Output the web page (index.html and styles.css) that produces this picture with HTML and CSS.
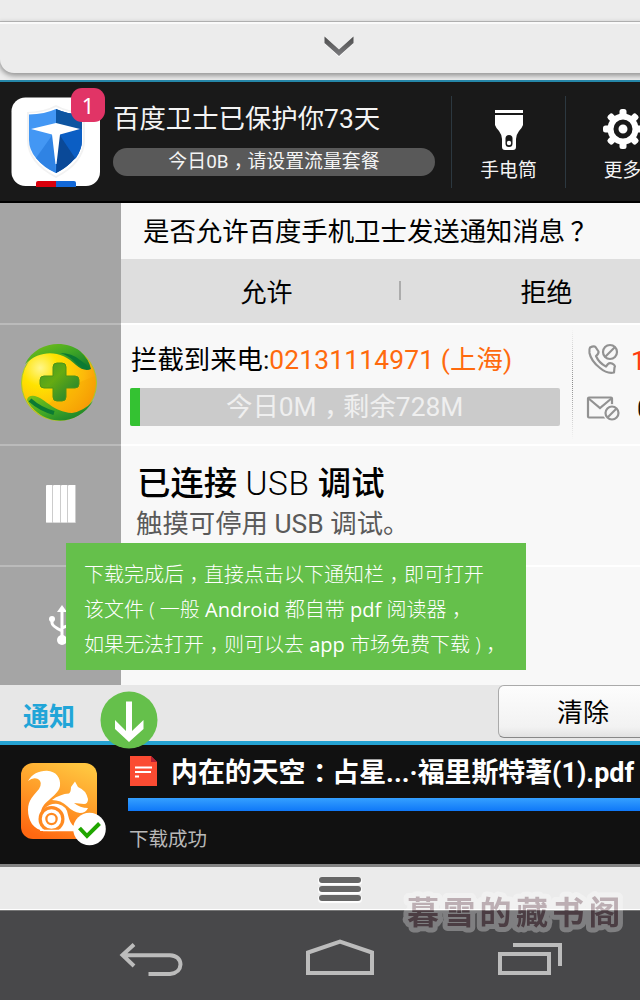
FILE: index.html
```html
<!DOCTYPE html>
<html lang="zh-CN">
<head>
<meta charset="utf-8">
<title>通知</title>
<link rel="stylesheet" href="styles.css">
</head>
<body>
<main class="screen">
  <div class="drawer">
    <div class="drawer-strip"></div>
    <div class="drawer-panel">
      <svg class="chevron" width="34" height="24" viewBox="0 0 34 24"><defs><linearGradient id="cg" x1="0" y1="0" x2="0" y2="1"><stop offset="0" stop-color="#4d4d4d"/><stop offset="1" stop-color="#7c7c7f"/></linearGradient></defs><path d="M3 4.500L17 17.500L31 4.500V9L17 22L3 9Z" fill="#fff"/><path d="M2.500 1.500L17 14.500L31.500 1.500V8L17 21L2.500 8Z" fill="url(#cg)"/></svg>
    </div>
  </div>

  <section class="guard">
    <div class="guard-logo">
      <svg width="90" height="90" viewBox="0 0 90 90">
        <rect x=".5" y=".5" width="88.500" height="88.500" rx="14" fill="#fff"/>
        <path d="M45 8Q58 15 74 15V43Q74 66 45 81Q16 66 16 43V15Q32 15 45 8Z" fill="#f2f2f2"/>
        <path d="M45 10Q57 16 72 16V43Q72 65 45 79Q18 65 18 43V16Q33 16 45 10Z" fill="#fff"/>
        <path d="M45 12Q34 17 18 17.500V43Q18 62 45 76Z" fill="#4397f4"/>
        <path d="M45 12Q56 17 71 17.500V43Q71 62 45 76Z" fill="#0b57b2"/>
        <path d="M45 12V27L71 32V17.500Q56 17 45 12Z" fill="#0d55a1"/>
        <path d="M45 76L65 61Q71 52 71 43V32L48 37Z" fill="#0b5ec4"/>
        <path d="M48 37L64 61Q56 71 45 76Z" fill="#0a4998"/>
        <path d="M42 37L25 61Q33 71 45 76Z" fill="#2f83e4"/>
        <path d="M20 32L45 26L69 32L49 37.500L45.500 67H44.500L41 37.500Z" fill="#fff"/>
        <path d="M25 89V86Q25 84 27 84H45V90H25Z" fill="#d9000c"/><path d="M45 84H63Q65 84 65 86V90H45Z" fill="#1268d8"/>
      </svg>
      <span class="guard-count">1</span>
    </div>
    <div class="guard-info">
      <div class="guard-title">百度卫士已保护你73天</div>
      <div class="guard-pill">今日0B<i class="mid">，</i>请设置流量套餐</div>
    </div>
    <div class="tool tool-torch">
      <svg width="30" height="42" viewBox="0 0 30 42"><path fill="#fff" d="M1 1H29V4H1ZM1 6H29V16Q28 19 25 22Q22 26 22 30V38Q22 41 19 41H11Q8 41 8 38V30Q8 26 5 22Q2 19 1 16Z"/><rect x="11.500" y="26" width="7" height="12" rx="3.500" fill="#191919"/><circle cx="15" cy="34" r="2.200" fill="#fff"/></svg>
      <span>手电筒</span>
    </div>
    <div class="tool tool-more">
      <svg width="42" height="42" viewBox="-21 -21 42 42"><g fill="#fff"><g id="teeth"><rect x="-3.500" y="-20" width="7" height="40" rx="2.500"/><rect x="-20" y="-3.500" width="40" height="7" rx="2.500"/></g><use href="#teeth" transform="rotate(45)"/><circle r="15.500"/></g><circle r="7" fill="none" stroke="#191919" stroke-width="5"/></svg>
      <span>更多</span>
    </div>
  </section>

  <section class="list">
    <article class="row row-ask">
      <div class="side"></div>
      <div class="body">
        <div class="ask-title">是否允许百度手机卫士发送通知消息<i class="mid-q">？</i></div>
        <div class="ask-actions"><span class="act">允许</span><b class="act-sep"></b><span class="act">拒绝</span></div>
      </div>
    </article>

    <article class="row row-360">
      <div class="side">
        <svg width="78" height="78" viewBox="0 0 78 78">
          <defs><radialGradient id="y" cx=".25" cy=".3" r=".8"><stop offset="0" stop-color="#fff68a"/><stop offset=".3" stop-color="#ffe300"/><stop offset=".75" stop-color="#fdb80a"/><stop offset="1" stop-color="#f79a08"/></radialGradient><linearGradient id="g" x1="0" y1="0" x2="1" y2="1"><stop offset="0" stop-color="#7fc315"/><stop offset=".5" stop-color="#3fa626"/><stop offset="1" stop-color="#0b7330"/></linearGradient><linearGradient id="p" x1="0" y1="0" x2="1" y2="1"><stop offset="0" stop-color="#3f9a28"/><stop offset=".4" stop-color="#65ab12"/><stop offset="1" stop-color="#157b37"/></linearGradient></defs>
          <circle cx="39" cy="39" r="37.500" fill="url(#y)" stroke="#a8c928"/>
          <path d="M43 45L75 32Q77 57 54 68Q39 69 27 62Z" fill="#f6a400" opacity=".4"/>
          <path d="M5 20C16-2 44-5 60 7Q69 15 71 25Q64 28 56 21C42 7 22 4 5 20Z" fill="url(#g)"/>
          <path d="M40 9Q52 9 60 16Q65 19 70 25Q64 26 57 20Q50 12 40 9Z" fill="#0b7a33"/>
          <path d="M7 56Q8 51 15 52C26 55 33 68 52 69Q64 67 73 57C61 78 35 82 18 69Q10 63 7 56Z" fill="url(#g)"/>
          <path d="M10 56Q20 65 34 69" fill="none" stroke="#0b7a33" stroke-width="4"/>
          <path d="M37 19H42Q46 19 46 23V32H55Q59 32 59 36V40Q59 44 55 44H46V53Q46 57 42 57H37Q33 57 33 53V44H24Q20 44 20 40V36Q20 32 24 32H33V23Q33 19 37 19Z" fill="url(#p)" stroke="#4e9318"/>
        </svg>
      </div>
      <div class="body body-360">
        <div class="call">
          <div class="call-line">拦截到来电:<em>02131114971 (上海)</em></div>
          <div class="quota"><b class="quota-used"></b><span>今日0M<i class="mid">，</i>剩余728M</span></div>
        </div>
        <div class="dots"></div>
        <div class="stats">
          <div class="stat"><svg width="34" height="34" viewBox="0 0 34 34" fill="none" stroke="#929292" stroke-width="2.200"><path d="M4 4.500Q8 2.500 9.500 4L12.500 8.500Q13 10.500 10 13Q13 20 20 23.500L22 21Q23.500 19.500 26 20.500Q30 22.500 28.500 24.500L28 29.500Q21 31 14 25Q5 18 3.500 10Q3 6 4 4.500Z" stroke-linejoin="round"/><circle cx="24" cy="9" r="9.500" fill="#f8f8f8" stroke="none"/><circle cx="24" cy="9" r="7"/><path d="M19 14L29 4"/></svg><span class="num-red">1</span></div>
          <div class="stat stat-mail"><svg width="34" height="28" viewBox="0 0 34 28" fill="none" stroke="#929292" stroke-width="2.200"><rect x="2" y="2.500" width="24" height="20" rx="1"/><path d="M2 3L14 13L26 3"/><circle cx="26" cy="18" r="9" fill="#f8f8f8" stroke="none"/><circle cx="26" cy="18" r="6.500"/><path d="M21.500 22.500L30.500 13.500"/></svg><span class="num-black">0</span></div>
        </div>
      </div>
    </article>

    <article class="row row-usb">
      <div class="side"><div class="bars"><b></b><b></b><b></b><b></b></div></div>
      <div class="body">
        <div class="usb-title">已连接 <span>USB</span> 调试</div>
        <div class="usb-sub">触摸可停用 USB 调试。</div>
      </div>
    </article>

    <article class="row row-last">
      <div class="side"><svg width="32" height="42" viewBox="0 0 32 42" fill="none" stroke="#fff" stroke-width="3"><path d="M17 5V36M7 15V19Q7 22 17 27M27 13V18Q27 20 17 24"/><path d="M17 1L22 8H12Z" fill="#fff" stroke="none"/><circle cx="17" cy="36" r="5" fill="#fff" stroke="none"/><circle cx="7" cy="15" r="3" fill="#fff" stroke="none"/></svg></div>
      <div class="body"></div>
    </article>

    <aside class="tip">
      <p>下载完成后<i class="mid">，</i>直接点击以下通知栏<i class="mid">，</i>即可打开</p>
      <p>该文件 ( 一般 <b>Android</b> 都自带 <b>pdf</b> 阅读器<i class="mid">，</i></p>
      <p>如果无法打开<i class="mid">，</i>则可以去 <b>app</b> 市场免费下载 )<i class="mid">，</i></p>
    </aside>
  </section>

  <section class="bar">
    <h2>通知</h2>
    <button class="clear">清除</button>
    <svg class="down" width="58" height="58" viewBox="0 0 58 58"><circle cx="29" cy="29" r="28.500" fill="#65c04b"/><path d="M26 10.500H32V40L43.500 29V38L29 51L15 38V29L26 40Z" fill="#fff"/></svg>
  </section>

  <section class="download">
    <div class="app">
      <svg width="88" height="86" viewBox="0 0 88 86">
        <defs><linearGradient id="o" x1=".7" y1="0" x2=".3" y2="1"><stop offset="0" stop-color="#ffc53f"/><stop offset=".5" stop-color="#ff9a27"/><stop offset="1" stop-color="#ff6811"/></linearGradient></defs>
        <rect x="1" y="1" width="76" height="76" rx="12" fill="url(#o)"/>
        <path d="M8 19C12 12 19 8.500 27 8.700C36 9 41 16 40 24C39 30 33 34 29 38C24 42 21 46 21 51L20 60Q20 66 25 69C13 68 8 58 8 48C8 38 14 33 19 27Q23 20 18 17Q13 15 8 19Z" fill="#fff"/>
        <path d="M32 38Q40 32 49 31.500Q51 30 51 25L55 19.500L58 25Q66 28 68 37Q68 42 64 42L54 41Q60 46 68 46Q66 51 60 51Q53 50 47 44Q41 38 32 38Z" fill="#fff"/>
        <path d="M24 47Q30 41 38 42Q47 44 48 53Q50 62 54 64L56 69H20Z" fill="#fff"/>
        <circle cx="31.500" cy="57" r="13" fill="#ff8a21"/><circle cx="31.500" cy="57" r="8" fill="none" stroke="#fff" stroke-width="3.500"/><circle cx="31.500" cy="57" r="4" fill="#fff"/>
        <path d="M23 68.500H54" stroke="#fff" stroke-width="1.500"/>
        <circle cx="69.500" cy="67" r="16.300" fill="#fff"/><path d="M59.500 66L67 74L79.500 61.500" fill="none" stroke="#20a600" stroke-width="4"/>
      </svg>
    </div>
    <div class="file">
      <div class="file-head">
        <svg width="27" height="30" viewBox="0 0 27 30"><path d="M0 0H21L27 6V30H0Z" fill="#fb4b32"/><path d="M21 0L27 6H21Z" fill="#b51f35"/><path d="M5 11.500H22M5 16H21M5 20.500H9" stroke="#fff" stroke-width="2" fill="none"/></svg>
        <span class="file-name">内在的天空<i class="mid">：</i>占星...·福里斯特著(1).pdf</span>
      </div>
      <div class="file-bar"></div>
      <div class="file-state">下载成功</div>
    </div>
  </section>

  <div class="handle"><b></b><b></b><b></b></div>

  <nav class="nav">
    <svg width="64" height="36" viewBox="0 0 64 36" fill="none" stroke="#bcbcbc" stroke-width="4"><path d="M29.500 32H51Q61 31 61.500 22.500Q61 14 51 13.300H5M15 2.500L3.500 13L15 24"/></svg>
    <svg class="home" width="70" height="38" viewBox="0 0 70 38" fill="none" stroke="#bcbcbc" stroke-width="4"><path d="M3 35V14.500L35 3.500L67 14.500V35Z"/></svg>
    <svg width="66" height="34" viewBox="0 0 66 34" fill="none" stroke="#bcbcbc" stroke-width="4"><rect x="3" y="12" width="49" height="19"/><path d="M16 3H63V24"/></svg>
  </nav>

  <svg class="mark" width="236" height="54" viewBox="0 0 236 54"><text x="10" y="36">暮雪的藏书阁</text></svg>
</main>
</body>
</html>
```
FILE: styles.css
```css
* { box-sizing: border-box; }
body { margin: 0; }
i, em { font-style: normal; }
svg { display: block; flex: none; }
p, h2 { margin: 0; }

.screen {
  position: relative;
  width: 640px;
  height: 1000px;
  overflow: hidden;
  display: flex;
  flex-direction: column;
  background: #f8f8f8;
  font-family: Roboto, "Noto Sans CJK SC", sans-serif;
  white-space: nowrap;
}
.screen > * { flex: none; }

/* full-width punctuation set in the middle of its cell */
.mid { margin-left: .28em; letter-spacing: -.28em; }
.mid-q { margin-left: .2em; }

.drawer { height: 80px; background: #ececec; overflow: hidden; }
.drawer-strip { height: 22px; border-bottom: 1px solid #b8b8b8; }
.drawer-panel {
  width: 660px;
  height: 51px;
  padding: 11px 0 0 322px;
  border-top: 2px solid #fafafa;
  border-radius: 0 0 0 14px;
  background: #ececec;
  box-shadow: 0 2px 5px 1px #999;
}

.guard {
  height: 123px;
  display: flex;
  background: #191919;
  border-top: 2px solid #2586a8;
  border-bottom: 2px solid #000;
}
.guard > * { flex: none; }
.guard-logo { position: relative; width: 113px; padding: 15px 0 0 11px; }
.guard-count {
  position: absolute;
  left: 71px;
  top: 6px;
  width: 34px;
  height: 34px;
  border-radius: 11px;
  background: #e13466;
  color: #fff;
  font: 22px/34px "Noto Sans", sans-serif;
  text-align: center;
}
.guard-info { width: 338px; color: #f4f4f4; }
.guard-title { padding-top: 19px; height: 66px; font-size: 26.4px; line-height: 36px; }
.guard-pill {
  width: 322px;
  height: 28px;
  border-radius: 14px;
  background: #595959;
  font-size: 18.9px;
  line-height: 27px;
  text-align: center;
}
.tool {
  width: 114px;
  height: 92px;
  margin-top: 14px;
  padding-top: 12px;
  border-left: 1px solid #2c3840;
  display: flex;
  flex-direction: column;
  align-items: center;
  color: #f4f4f4;
  font-size: 18.8px;
  line-height: 26px;
}
.tool span { margin-top: 8px; }
.tool-torch svg { margin-top: 1px; }
.tool-torch span { margin-top: 7px; }

.list { position: relative; height: 482px; }
.row { display: flex; height: 121px; border-bottom: 2px solid #fff; }
.row-ask { height: 122px; }
.row-last { height: 118px; border: 0; }
.side {
  width: 121px;
  margin-bottom: -2px;
  border-bottom: 2px solid #bbb;
  background: #a5a5a5;
  display: flex;
  justify-content: center;
  flex: none;
}
.row-last .side { margin: 0; border: 0; padding-top: 37px; }
.body { flex: 1; min-width: 0; }

.ask-title { height: 56px; padding-left: 22px; font-size: 26.4px; line-height: 58px; color: #000; }
.ask-actions {
  height: 64px;
  display: flex;
  align-items: center;
  width: 560px;
  padding-bottom: 2px;
  background: #dedede;
  font-size: 26px;
  color: #000;
}
.act { width: 278px; padding-left: 13px; text-align: center; flex: none; }
.act-sep { width: 2px; height: 19px; background: #acacac; }

.row-360 .side { padding-top: 19px; padding-right: 4px; }
.body-360 { display: flex; }
.body-360 > * { flex: none; }
.call { width: 451px; padding: 17px 0 0 10px; }
.call-line { height: 46px; font-size: 26.4px; line-height: 36px; color: #000; }
.call-line em { color: #ff6a0d; letter-spacing: .15px; }
.quota {
  width: 430px;
  height: 38px;
  margin-left: -1px;
  border-radius: 2px;
  overflow: hidden;
  display: flex;
  background: #cbcbcb;
  color: #efefef;
  font-size: 26.4px;
  line-height: 39px;
}
.quota-used { width: 10px; background: #34c232; }
.quota span { padding-left: 86px; }
.dots {
  width: 1px;
  height: 112px;
  margin-top: 3px;
  background: repeating-linear-gradient(#888 0 1px, transparent 1px 2px);
  -webkit-mask-image: linear-gradient(transparent, #000, transparent);
  mask-image: linear-gradient(transparent, #000, transparent);
}
.stats { padding: 18px 0 0 13px; font-size: 26px; line-height: 36px; }
.stat { display: flex; height: 52px; }
.stat span { margin-left: 11px; }
.stat-mail { line-height: 28px; }
.num-red { color: #ff3c0d; }
.num-black { color: #111; }
.stat-mail .num-black { margin-left: 17px; }

.bars { display: flex; height: 38px; margin-top: 39px; }
.bars b { width: 7.5px; background: #fff; border-right: 1px solid #ccc; border-bottom: 1px solid #ddd; border-radius: 1px; }
.usb-title { height: 60px; padding: 15px 0 0 16px; font-size: 33.4px; line-height: 46px; font-weight: 500; color: #000; }
.usb-title span { font-weight: 300; letter-spacing: .6px; }
.usb-sub { padding-left: 15px; font-size: 26.4px; line-height: 36px; color: #5a5a5a; }

.tip {
  position: absolute;
  left: 66px;
  top: 340px;
  width: 460px;
  height: 127px;
  padding: 14px 18px;
  background: #65c04b;
  color: #fff;
  font: 300 20px/35px "Open Sans", "Noto Sans CJK SC", sans-serif;
}
.tip b { font-weight: 400; }

.bar {
  position: relative;
  height: 60px;
  display: flex;
  justify-content: space-between;
  background: #e7e7e7;
  border-bottom: 4px solid #25a2d2;
}
.bar h2 { padding-left: 23px; font-size: 26px; line-height: 64px; height: 56px; font-weight: 700; color: #21a5d8; }
.clear {
  width: 170px;
  height: 53px;
  margin-right: -28px;
  padding: 2px 0 0;
  border: 1px solid #aaa;
  border-bottom-color: #888;
  border-radius: 6px;
  background: linear-gradient(#fdfdfd, #f2f2f2 80%, #e2e2e2);
  font: 26px/50px Roboto, "Noto Sans CJK SC", sans-serif;
  color: #000;
}
.down { position: absolute; left: 99.5px; top: 6px; }

.download { height: 122px; display: flex; background: #111; border-bottom: 3px solid #838383; }
.app { width: 128px; padding: 17px 0 0 20px; flex: none; }
.file { width: 512px; }
.file-head { display: flex; height: 53px; padding: 11px 0 0 2px; }
.file-name { margin-left: 14px; font-size: 26.9px; line-height: 34px; font-weight: 700; color: #fff; }
.file-bar { height: 13px; background: linear-gradient(#35a0ff, #0f78f8); }
.file-state { padding-left: 1px; font-size: 19.5px; line-height: 57px; height: 55px; color: #b8b8b8; }

.handle {
  height: 43px;
  padding: 10px 0 0 40px;
  display: flex;
  flex-direction: column;
  align-items: center;
  gap: 3px;
  background: #ebebeb;
  border-bottom: 1px solid #fff;
}
.handle b { width: 42px; height: 6px; border-radius: 3px; background: #666; box-shadow: 0 1px 1px 1px #fff; }

.nav {
  height: 90px;
  display: flex;
  padding: 31px 0 0 118.5px;
  background: #48484a;
  border-top: 1px solid #777;
}
.nav .home { margin: -4px 122px 0; }

.mark { position: absolute; left: 397px; top: 888px; opacity: .3; overflow: visible; }
.mark text {
  font: 700 32px "Noto Sans CJK SC", sans-serif;
  letter-spacing: 4.3px;
  fill: #522634;
  stroke: #fff;
  stroke-width: 10px;
  stroke-linejoin: round;
  paint-order: stroke;
}
```
